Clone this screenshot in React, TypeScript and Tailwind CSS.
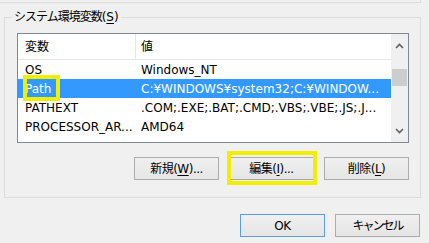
import React from "react";

const font = { fontFamily: '"DejaVu Sans", "Noto Sans CJK JP", sans-serif' };

type Row = { name: string; value: string; selected?: boolean };

const rows: Row[] = [
  { name: "OS", value: "Windows_NT" },
  { name: "Path", value: "C:¥WINDOWS¥system32;C:¥WINDOW...", selected: true },
  { name: "PATHEXT", value: ".COM;.EXE;.BAT;.CMD;.VBS;.VBE;.JS;.J..." },
  { name: "PROCESSOR_AR...", value: "AMD64" },
];

function WinButton({
  label,
  mnemonic,
  suffix = "",
  primary = false,
  tight = false,
}: {
  label: string;
  mnemonic?: string;
  suffix?: string;
  primary?: boolean;
  tight?: boolean;
}) {
  return (
    <button
      type="button"
      className={`flex h-[23px] w-[85px] items-center justify-center border bg-gradient-to-b from-[#f0f0f0] to-[#e5e5e5] text-[12px] text-black ${
        primary ? "border-[#5b9ee0]" : "border-[#acacac]"
      }`}
    >
      <span className={tight ? "tracking-[-2px]" : "tracking-[-0.5px]"}>
        {label}
        {mnemonic ? (
          <>
            (<span className="underline underline-offset-2">{mnemonic}</span>)
          </>
        ) : null}
        {suffix}
      </span>
    </button>
  );
}

function Chevron({ down = false }: { down?: boolean }) {
  return (
    <svg width="9" height="6" viewBox="0 0 9 6" className={down ? "rotate-180" : ""}>
      <path d="M1 5 L4.5 1.5 L8 5" fill="none" stroke="#606060" strokeWidth="1.6" />
    </svg>
  );
}

export default function App() {
  return (
    <div className="h-[243px] w-[429px] overflow-hidden bg-[#f0f0f0] text-black" style={font}>
      <div className="h-[3px] w-[421px] border-b border-r border-[#dcdcdc]" />

      <div className="relative ml-[4px] mt-[14px] h-[181px] w-[417px] border border-[#dcdcdc] pl-[12px] pt-[15px]">
        <span className="absolute -top-[10px] left-[7px] bg-[#f0f0f0] px-[2px] text-[12px] leading-[18px]">
          <span className="tracking-[-1px]">システム環境変数</span>(
          <span className="underline underline-offset-2">S</span>)
        </span>

        <div className="flex h-[110px] w-[392px] border border-[#828790] bg-white text-[12px]">
          <div className="flex w-[373px] flex-col overflow-hidden">
            <div className="flex h-[26px] shrink-0 border-b border-[#e5e5e5]">
              <div className="flex w-[118px] items-center border-r border-[#e5e5e5] pl-[7px]">変数</div>
              <div className="flex items-center pl-[5px]">値</div>
            </div>
            {rows.map((row) => (
              <div
                key={row.name}
                className={`relative flex h-[19px] shrink-0 items-center whitespace-nowrap ${
                  row.selected ? "bg-[#3399ff] text-white" : ""
                }`}
              >
                <div className="w-[118px] pl-[7px]">{row.name}</div>
                <div className="pl-[5px]">{row.value}</div>
                {row.selected ? (
                  <div className="absolute -top-[4px] left-[5px] h-[26px] w-[37px] border-[4px] border-[#f2ee00]" />
                ) : null}
              </div>
            ))}
          </div>
          <div className="flex w-[17px] flex-col items-center bg-[#f0f0f0]">
            <div className="flex h-[20px] items-center pt-[4px]">
              <Chevron />
            </div>
            <div className="mt-[15px] h-[17px] w-[15px] bg-[#cdcdcd]" />
            <div className="flex-1" />
            <div className="flex h-[20px] items-center pb-[2px]">
              <Chevron down />
            </div>
          </div>
        </div>

        <div className="mt-[14px] flex w-[392px] justify-end gap-[10px]">
          <WinButton label="新規" mnemonic="W" suffix="..." />
          <div className="relative">
            <WinButton label="編集" mnemonic="I" suffix="..." />
            <div className="absolute -left-[2px] -top-[6px] h-[34px] w-[90px] border-[4px] border-[#f2ee00]" />
          </div>
          <WinButton label="削除" mnemonic="L" />
        </div>
      </div>

      <div className="mt-[16px] flex justify-end gap-[10px] pr-[9px]">
        <WinButton label="OK" primary />
        <WinButton label="キャンセル" tight />
      </div>
    </div>
  );
}
